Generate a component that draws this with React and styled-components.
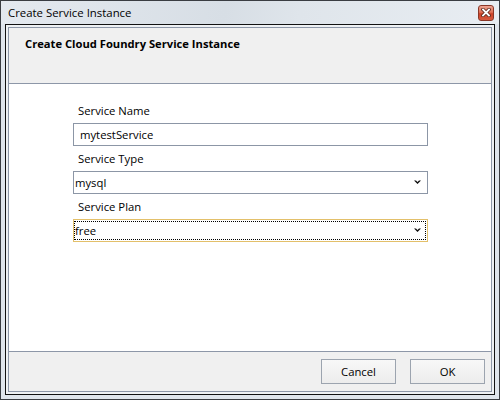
import React from "react";
import styled, { createGlobalStyle } from "styled-components";

const Global = createGlobalStyle`
  html, body { margin: 0; padding: 0; background: #ffffff; }
  body { font-family: "Open Sans", "Noto Sans", sans-serif; font-size: 11.3px; color: #000; }
  * { box-sizing: border-box; }
`;

const Window = styled.div`
  width: 500px;
  height: 400px;
  border: 1px solid #3a3d42;
  background: #dfe5ec;
  display: flex;
  flex-direction: column;
  padding: 0 4px 4px;
`;

const TitleBar = styled.div`
  height: 23px;
  margin: 0 -4px;
  padding: 0 5px 0 7px;
  display: flex;
  align-items: center;
  justify-content: space-between;
  background: linear-gradient(100deg, #e4e9ef 0%, #d7dee5 45%, #dfe5eb 60%, #e8edf2 100%);
`;

const Title = styled.span`
  font-size: 11.4px;
  line-height: 16px;
  color: #000;
`;

const CloseButton = styled.div`
  width: 16px;
  height: 16px;
  border: 1px solid #8a3626;
  border-radius: 3px;
  background: linear-gradient(#eea593 0%, #de6f55 45%, #cc4127 55%, #d65a3e 100%);
  display: flex;
  align-items: center;
  justify-content: center;
`;

const Frame = styled.div`
  flex: 1;
  display: flex;
  border: 1px solid #111;
  padding: 2px;
  background: #eef1f4;
`;

const Panel = styled.div`
  flex: 1;
  display: flex;
  flex-direction: column;
  border: 1px solid #8d97a8;
`;

const Header = styled.div`
  height: 56px;
  background: #f0f0f0;
  border-bottom: 1px solid #8d97a8;
  padding: 8px 16px 0;
`;

const Heading = styled.div`
  font-weight: 700;
  font-size: 11.2px;
  line-height: 16px;
`;

const Body = styled.div`
  flex: 1;
  background: #fff;
  padding: 19px 0 0 64px;
`;

const Form = styled.div`
  width: 355px;
  display: flex;
  flex-direction: column;
  gap: 5px;
`;

const Field = styled.div`
  display: flex;
  flex-direction: column;
  gap: 4px;
`;

const Label = styled.label`
  padding-left: 5px;
  font-size: 11.3px;
  line-height: 16px;
`;

const TextInput = styled.input`
  height: 23px;
  width: 100%;
  border: 1px solid #8c96a6;
  padding: 0 6px;
  font: inherit;
  font-size: 11.3px;
  color: #000;
  background: #fff;
  outline: none;
`;

const Combo = styled.div`
  height: 23px;
  border: 1px solid ${(p) => (p.$focused ? "#e3c06a" : "#8c96a6")};
  padding: 1px 1px 1px 0;
  display: flex;
  background: #fff;
`;

const ComboInner = styled.div`
  flex: 1;
  display: flex;
  align-items: center;
  justify-content: space-between;
  border: 1px ${(p) => (p.$focused ? "dotted #000" : "solid transparent")};
  padding: 0 4px 0 0;
  font-size: 11.3px;
`;

const Footer = styled.div`
  border-top: 1px solid #8d97a8;
  background: #f0f0f0;
  padding: 7px 6px 7px 7px;
  display: flex;
  justify-content: flex-end;
  gap: 14px;
`;

const Button = styled.button`
  width: 75px;
  height: 25px;
  border: 1px solid #9ca4af;
  background: linear-gradient(#f8f8f8, #ececec);
  font: inherit;
  font-size: 11.3px;
  color: #000;
  padding: 0;
`;

const Chevron = () => (
  <svg width="7" height="5" viewBox="0 0 7 5">
    <path d="M0 0.5 L2 0.5 L3.5 2 L5 0.5 L7 0.5 L3.5 4 Z" fill="#111" />
  </svg>
);

const CloseX = () => (
  <svg width="10" height="9" viewBox="0 0 10 9">
    <path d="M2 1.5 L8 7.5 M8 1.5 L2 7.5" stroke="#5a2418" strokeWidth="3.4" strokeLinecap="square" />
    <path d="M2 1.5 L8 7.5 M8 1.5 L2 7.5" stroke="#fff" strokeWidth="1.8" strokeLinecap="square" />
  </svg>
);

const ComboBox = ({ value, focused }) => (
  <Combo $focused={focused}>
    <ComboInner $focused={focused}>
      <span>{value}</span>
      <Chevron />
    </ComboInner>
  </Combo>
);

export default function App() {
  return (
    <>
      <Global />
      <Window>
        <TitleBar>
          <Title>Create Service Instance</Title>
          <CloseButton>
            <CloseX />
          </CloseButton>
        </TitleBar>
        <Frame>
          <Panel>
            <Header>
              <Heading>Create Cloud Foundry Service Instance</Heading>
            </Header>
            <Body>
              <Form>
                <Field>
                  <Label>Service Name</Label>
                  <TextInput defaultValue="mytestService" />
                </Field>
                <Field>
                  <Label>Service Type</Label>
                  <ComboBox value="mysql" />
                </Field>
                <Field>
                  <Label>Service Plan</Label>
                  <ComboBox value="free" focused />
                </Field>
              </Form>
            </Body>
            <Footer>
              <Button>Cancel</Button>
              <Button>OK</Button>
            </Footer>
          </Panel>
        </Frame>
      </Window>
    </>
  );
}
